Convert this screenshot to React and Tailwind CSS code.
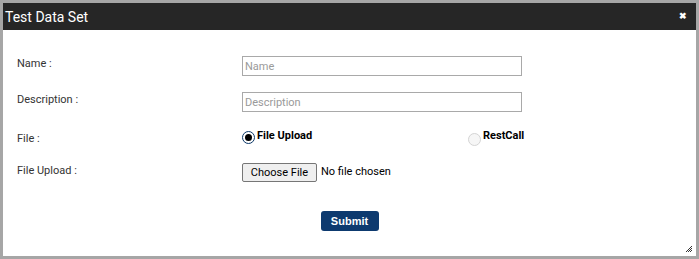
import React from 'react';

const Row = ({ label, children, className = '' }) => (
  <div className={`flex items-start ${className}`}>
    <div className="w-[225px] shrink-0 text-[11px] leading-[13px] text-[#333] pt-[1px]">{label}</div>
    <div className="flex-1">{children}</div>
  </div>
);

const App = () => {
  return (
    <div className="w-[699px] h-[259px] bg-[#a6a6a6] p-[3px] font-['Roboto',sans-serif]">
      <div className="relative w-full h-full bg-white flex flex-col">
        <div className="h-[27px] shrink-0 bg-[#262626] flex items-center justify-between pl-[2px] pr-[9px]">
          <span className="text-white text-[14px] leading-none">Test Data Set</span>
          <span className="text-white text-[9px] leading-none font-bold">✖</span>
        </div>

        <div className="pl-[14px] flex flex-col">
          <Row label="Name :" className="mt-[26px] h-[20px]">
            <input
              placeholder="Name"
              className="block w-[280px] h-[20px] border border-[#a9a9a9] px-[2px] text-[11px] placeholder:text-[#9a9a9a] outline-none"
            />
          </Row>
          <Row label="Description :" className="mt-[16px] h-[20px]">
            <input
              placeholder="Description"
              className="block w-[280px] h-[20px] border border-[#a9a9a9] px-[2px] text-[11px] placeholder:text-[#9a9a9a] outline-none"
            />
          </Row>
          <Row label="File :" className="mt-[19px] h-[13px]">
            <div className="flex items-start h-[13px]">
              <div className="flex items-start w-[226px]">
                <span className="w-[13px] h-[13px] rounded-full border-[1.5px] border-[#0b3768] flex items-center justify-center">
                  <span className="w-[7px] h-[7px] rounded-full bg-black" />
                </span>
                <span className="ml-[2px] -mt-[2px] text-[11px] leading-[13px] font-bold text-black">File Upload</span>
              </div>
              <div className="flex items-start">
                <span className="w-[13px] h-[13px] rounded-full border border-[#d4d4d4] bg-[#f6f6f6] mt-[2px]" />
                <span className="ml-[2px] -mt-[2px] text-[11px] leading-[13px] font-bold text-black">RestCall</span>
              </div>
            </div>
          </Row>
          <Row label="File Upload :" className="mt-[19px] h-[19px]">
            <div className="flex items-center h-[19px]">
              <button className="h-[19px] w-[75px] bg-[#efefef] border border-[#767676] rounded-[2px] text-[11px] leading-none text-black">
                Choose File
              </button>
              <span className="ml-[4px] text-[11px] text-black">No file chosen</span>
            </div>
          </Row>
        </div>

        <div className="flex justify-center mt-[29px]">
          <button className="w-[58px] h-[20px] bg-[#0d3a6f] rounded-[3px] text-white text-[11px] font-bold leading-none font-['Liberation_Sans',sans-serif]">
            Submit
          </button>
        </div>

        <svg className="absolute right-[3px] bottom-[3px]" width="8" height="8" viewBox="0 0 8 8">
          <path d="M7 1 L1 7 M7 3 L3 7 M7 5 L5 7" stroke="#333" strokeWidth="1" />
        </svg>
      </div>
    </div>
  );
};

export default App;
